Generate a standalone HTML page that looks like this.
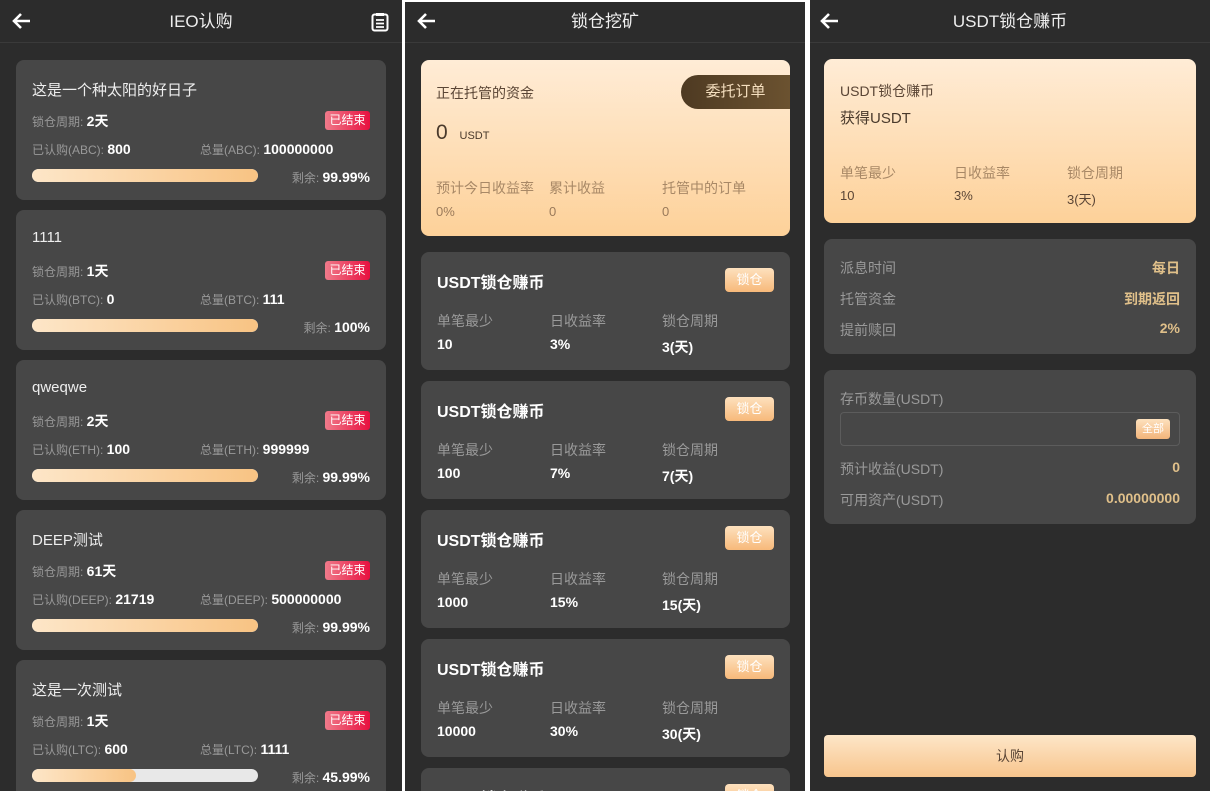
<!DOCTYPE html>
<html><head><meta charset="utf-8"><style>
*{margin:0;padding:0;box-sizing:border-box}
body{width:1210px;height:791px;background:#fff;position:relative;overflow:hidden;font-family:"Liberation Sans","Noto Sans CJK SC",sans-serif}
.p{position:absolute;top:0;height:791px;background:#2c2c2c;overflow:hidden}
.hd{position:absolute;left:0;right:0;top:0;height:43px;border-bottom:1px solid #3a3a3a;color:#eee;font-size:17px;text-align:center;line-height:43px}
.ar{position:absolute;left:12px;top:12px}
.c{position:absolute;background:#474747;border-radius:8px}
.a{position:absolute;white-space:nowrap}
.g{color:#999;font-size:12px}
.w{color:#fff;font-weight:bold;font-size:14px}
.tag{position:absolute;right:16px;width:45px;height:19px;border-radius:3px;background:linear-gradient(90deg,#f07a8a,#e8103f);color:#fff;font-size:12px;line-height:19px;text-align:center}
.bar{position:absolute;left:16px;width:226px;height:13px;border-radius:7px;background:#e8e8e8;overflow:hidden}
.bar i{display:block;height:100%;border-radius:7px;background:linear-gradient(90deg,#fde6c8,#f8c383)}
.gold{background:linear-gradient(180deg,#ffecd6,#fdd199);border-radius:8px}
.lk{position:absolute;right:16px;top:16px;width:49px;height:24px;border-radius:4px;background:linear-gradient(180deg,#fde1be,#f7b97a);color:#fff;font-size:13px;text-align:center;line-height:24px}
.gr{color:#9a9a9a;font-size:14px}
.bw{color:#fff;font-weight:bold;font-size:14px}
.br{color:#a88866;font-size:14px}
.bd{color:#5a4535;font-size:13px}
.gv{color:#e0c08a;font-weight:bold;font-size:14px}
</style></head><body>
<!-- panel 1 -->
<div class="p" style="left:0;width:402px">
<div class="hd">IEO认购
<svg class="ar" width="20" height="18" viewBox="0 0 20 18"><path d="M18 9H3M9 2L2 9l7 7" stroke="#fff" stroke-width="2.6" fill="none"/></svg>
<svg style="position:absolute;right:13px;top:12px" width="18" height="20" viewBox="0 0 18 20"><rect x="1.5" y="2.5" width="15" height="16" rx="2" stroke="#fff" stroke-width="2" fill="none"/><rect x="5" y="1" width="8" height="3" fill="#fff"/><path d="M5 8h8M5 11.5h8M5 15h8" stroke="#fff" stroke-width="1.8"/></svg>
</div>
<div id="l1"></div>
</div>
<div style="position:absolute;left:402px;top:0;width:3px;height:791px;background:#fff"></div>
<!-- panel 2 -->
<div class="p" style="left:405px;width:400px;">
<div class="hd">锁仓挖矿
<svg class="ar" width="20" height="18" viewBox="0 0 20 18"><path d="M18 9H3M9 2L2 9l7 7" stroke="#fff" stroke-width="2.6" fill="none"/></svg></div>
<div class="c gold" style="left:16px;top:60px;width:369px;height:176px">
<div class="a" style="left:15px;top:23px;font-size:14px;color:#5a4535">正在托管的资金</div>
<div style="position:absolute;right:0;top:15px;width:109px;height:34px;border-radius:17px 0 0 17px;background:linear-gradient(90deg,#4e3a22,#6b5230);color:#f5dfbf;font-size:15px;line-height:34px;text-align:center">委托订单</div>
<div class="a" style="left:15px;top:61px;font-size:21px;color:#4a3a2c">0 <span style="font-size:11px;margin-left:6px">USDT</span></div>
<div class="a br" style="left:15px;top:118px">预计今日收益率</div>
<div class="a br" style="left:128px;top:118px">累计收益</div>
<div class="a br" style="left:241px;top:118px">托管中的订单</div>
<div class="a" style="left:15px;top:144px;font-size:13px;color:#9a7a5a">0%</div>
<div class="a" style="left:128px;top:144px;font-size:13px;color:#9a7a5a">0</div>
<div class="a" style="left:241px;top:144px;font-size:13px;color:#9a7a5a">0</div>
</div>
<div id="l2"></div>
</div>
<div style="position:absolute;left:805px;top:0;width:5px;height:791px;background:#fff"></div>
<div style="position:absolute;left:402px;top:0;width:408px;height:2px;background:#fff"></div>
<!-- panel 3 -->
<div class="p" style="left:810px;width:400px">
<div class="hd">USDT锁仓赚币
<svg class="ar" style="left:10px" width="20" height="18" viewBox="0 0 20 18"><path d="M18 9H3M9 2L2 9l7 7" stroke="#fff" stroke-width="2.6" fill="none"/></svg></div>
<div class="c gold" style="left:14px;top:59px;width:372px;height:164px">
<div class="a bd" style="left:16px;top:22px;font-size:14px">USDT锁仓赚币</div>
<div class="a" style="left:16px;top:48px;font-size:15px;color:#4a3a2c">获得USDT</div>
<div class="a br" style="left:16px;top:104px">单笔最少</div>
<div class="a br" style="left:130px;top:104px">日收益率</div>
<div class="a br" style="left:243px;top:104px">锁仓周期</div>
<div class="a" style="left:16px;top:129px;font-size:13px;color:#5a4535">10</div>
<div class="a" style="left:130px;top:129px;font-size:13px;color:#5a4535">3%</div>
<div class="a" style="left:243px;top:130px;font-size:13px;color:#5a4535">3(天)</div>
</div>
<div class="c" style="left:14px;top:239px;width:372px;height:115px">
<div class="a gr" style="left:16px;top:19px">派息时间</div><div class="a gv" style="right:16px;top:19px">每日</div>
<div class="a gr" style="left:16px;top:50px">托管资金</div><div class="a gv" style="right:16px;top:50px">到期返回</div>
<div class="a gr" style="left:16px;top:81px">提前赎回</div><div class="a gv" style="right:16px;top:81px">2%</div>
</div>
<div class="c" style="left:14px;top:370px;width:372px;height:154px">
<div class="a gr" style="left:16px;top:19px">存币数量(USDT)</div>
<div style="position:absolute;left:16px;top:42px;width:340px;height:34px;border:1px solid #5c5c5c;border-radius:4px"><div style="position:absolute;right:9px;top:6px;width:34px;height:20px;border-radius:3px;background:linear-gradient(180deg,#fde1be,#f2b47a);color:#fff;font-size:11px;text-align:center;line-height:20px">全部</div></div>
<div class="a gr" style="left:16px;top:89px">预计收益(USDT)</div><div class="a gv" style="right:16px;top:89px">0</div>
<div class="a gr" style="left:16px;top:120px">可用资产(USDT)</div><div class="a gv" style="right:16px;top:120px">0.00000000</div>
</div>
<div style="position:absolute;left:14px;top:735px;width:372px;height:42px;border-radius:4px;background:linear-gradient(180deg,#fde6c8,#f8c58d);color:#5a4535;font-size:14px;text-align:center;line-height:42px">认购</div>
</div>
<script>
var d=[["这是一个种太阳的好日子","2天","ABC","800","100000000","99.99%",100],["1111","1天","BTC","0","111","100%",100],["qweqwe","2天","ETH","100","999999","99.99%",100],["DEEP测试","61天","DEEP","21719","500000000","99.99%",100],["这是一次测试","1天","LTC","600","1111","45.99%",46]];
var h="";d.forEach(function(r,i){var t=60+i*150;h+='<div class="c" style="left:16px;top:'+t+'px;width:370px;height:140px"><div class="a" style="left:16px;top:19px;color:#eee;font-size:15px">'+r[0]+'</div><div class="a" style="left:16px;top:51px"><span class="g">锁仓周期: </span><span class="w">'+r[1]+'</span></div><div class="tag" style="top:51px">已结束</div><div class="a" style="left:16px;top:81px"><span class="g">已认购('+r[2]+'): </span><span class="w">'+r[3]+'</span></div><div class="a" style="left:184px;top:81px"><span class="g">总量('+r[2]+'): </span><span class="w">'+r[4]+'</span></div><div class="bar" style="top:109px"><i style="width:'+r[6]+'%"></i></div><div class="a" style="right:16px;top:109px"><span class="g">剩余: </span><span class="w">'+r[5]+'</span></div></div>'});
document.getElementById("l1").outerHTML=h;
var e=[["10","3%","3(天)"],["100","7%","7(天)"],["1000","15%","15(天)"],["10000","30%","30(天)"],["","",""]];h="";
e.forEach(function(r,i){var t=252+i*129;h+='<div class="c" style="left:16px;top:'+t+'px;width:369px;height:118px"><div class="a" style="left:16px;top:17px;color:#fff;font-weight:bold;font-size:16px">USDT锁仓赚币</div><div class="lk">锁仓</div><div class="a gr" style="left:16px;top:59px">单笔最少</div><div class="a gr" style="left:129px;top:59px">日收益率</div><div class="a gr" style="left:241px;top:59px">锁仓周期</div><div class="a bw" style="left:16px;top:84px">'+r[0]+'</div><div class="a bw" style="left:129px;top:84px">'+r[1]+'</div><div class="a bw" style="left:241px;top:85px">'+r[2]+'</div></div>'});
document.getElementById("l2").outerHTML=h;
</script>
</body></html>
